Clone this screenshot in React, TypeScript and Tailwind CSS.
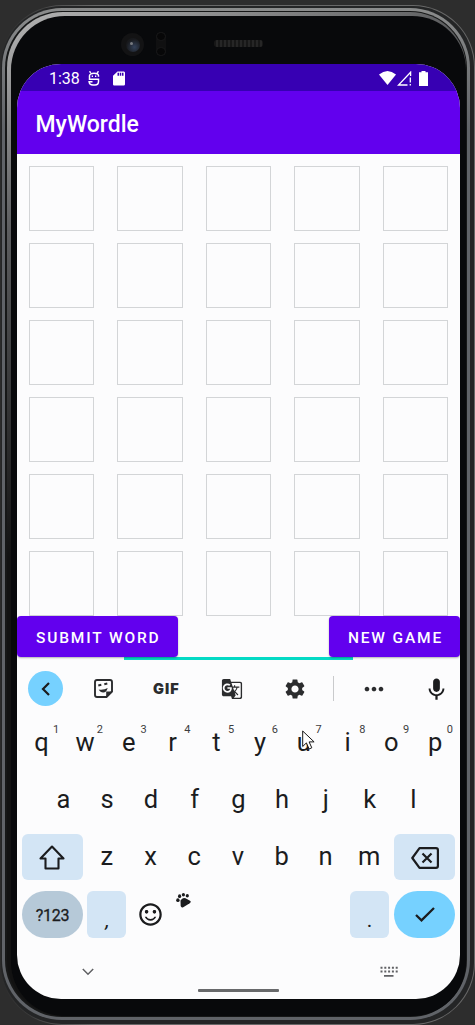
import React from "react";
import { MdGTranslate, MdSettings, MdMoreHoriz, MdKeyboardVoice, MdSdCard, MdSentimentSatisfiedAlt } from "react-icons/md";

const topRow = ["q", "w", "e", "r", "t", "y", "u", "i", "o", "p"];
const homeRow = ["a", "s", "d", "f", "g", "h", "j", "k", "l"];
const bottomRow = ["z", "x", "c", "v", "b", "n", "m"];

function StatusBar() {
  return (
    <div className="flex h-[27px] items-center bg-[#3700b3] pt-px pl-[32px] text-white">
      <span className="w-[39px] pt-[2px] text-[16px] leading-none">1:38</span>
      <svg className="h-[15px] w-[12px]" viewBox="0 0 12 15" fill="none" stroke="currentColor" strokeWidth="1.500">
        <path d="M1.500 .3l1.300 1.600M10.500 .3L9.200 1.900M1.500 5.800V4.800C1.500 1.300 10.500 1.300 10.500 4.800V5.800M1.500 5.500v2.700h9M10.500 7.500V10.500c0 2-1.500 3.500-3.500 3.500H5c-2.300 0-3.700-1.200-3.900-3.200h3.400" />
        <path d="M3.700 5.200h1.300M7 5.200h1.300" />
      </svg>
      <MdSdCard className="ml-[10px] h-[17px] w-[18px]" preserveAspectRatio="none" />
      <div className="flex-1" />
      <svg className="h-[14px] w-[17px]" viewBox="0 0 17 14" fill="currentColor">
        <path d="M0 3.500Q8.500-3.500 17 3.500L8.500 14z" />
      </svg>
      <svg className="ml-px h-[15px] w-[15px]" viewBox="0 0 15 15" fill="none" stroke="currentColor" strokeWidth="1.300">
        <path d="M10.500 14H1.500L13.600 1.200V5M13.300 6.500v5M13.300 13v1.500" />
      </svg>
      <svg className="mr-[32px] ml-[7px] h-[15px] w-[9px]" viewBox="0 0 9 15" fill="currentColor">
        <path d="M2.500 0h4v1.300H9V15H0V1.300h2.500z" />
      </svg>
    </div>
  );
}

function Board() {
  return (
    <div className="grid grid-cols-[repeat(5,65.500px)] gap-x-[23px] gap-y-[12px] pt-[12px] pl-[11.500px]">
      {Array.from({ length: 30 }, (_, i) => (
        <div key={i} className="h-[65px] border border-[#d3d5d7]" />
      ))}
    </div>
  );
}

function Actions() {
  const button =
    "relative z-10 flex h-[41px] items-center justify-center rounded-[4px] bg-[#6200ee] pt-[4px] text-[15.500px] font-medium tracking-[1.850px] text-white shadow-[0_1px_2px_rgba(0,0,0,0.3)]";
  return (
    <div className="relative flex justify-between">
      <button className={button + " w-[160.500px] pl-[2px]"}>SUBMIT WORD</button>
      <button className={button + " w-[131px] pl-[2px]"}>NEW GAME</button>
      <div className="absolute top-[41px] left-[107px] h-[3px] w-[229px] bg-[#03dac5]" />
    </div>
  );
}

function Toolbar() {
  return (
    <div className="mt-[14px] flex h-[35px] items-center pl-[11px] text-[#2b2c2e]">
      <div className="flex h-[35px] w-[35px] items-center justify-center rounded-full bg-[#76d1ff]">
        <svg className="h-[14px] w-[10px]" viewBox="0 0 10 14" fill="none" stroke="#1b1c1e" strokeWidth="2.200">
          <path d="M8 1L2 7l6 6" />
        </svg>
      </div>
      <svg className="ml-[31px] h-[19px] w-[19px]" viewBox="0 0 19 19" fill="none" stroke="currentColor" strokeWidth="1.900">
        <path d="M3 1h13q2 0 2 2v9.500L12.500 18H3q-2 0-2-2V3q0-2 2-2z" />
        <path d="M12.200 18v-5.500H18z" fill="currentColor" stroke="none" />
        <path d="M4.300 6.500l3-.7M10.300 5.200l3-.7" strokeWidth="2" />
        <path d="M4.700 10.500q5 .8 9-1.500-1.300 4.500-4.500 4.500-3 0-4.500-3z" fill="currentColor" stroke="none" />
      </svg>
      <span className="ml-[40px] w-[30px] pt-px font-['Inter',sans-serif] text-[14.500px] leading-none font-black tracking-[1px]">GIF</span>
      <MdGTranslate className="ml-[38px] h-[22px] w-[22px]" />
      <MdSettings className="ml-[40px] h-[24px] w-[24px]" />
      <div className="ml-[26px] h-[25px] w-px bg-[#c9cacc]" />
      <MdMoreHoriz className="ml-[26px] h-[28px] w-[28px]" />
      <MdKeyboardVoice className="ml-[35px] h-[27px] w-[27px] text-[#1b1c1e]" />
    </div>
  );
}

function Letter({ char, hint }: { char: string; hint?: string }) {
  return (
    <div className="relative flex h-[46px] w-[43.750px] shrink-0 items-center justify-center">
      {char}
      {hint && <span className="absolute top-[4px] right-[4px] text-[11px] leading-none text-[#3c3d40]">{hint}</span>}
    </div>
  );
}

function Keyboard() {
  return (
    <div className="px-[5px] text-[25.500px] leading-none text-[#1b1c1e]">
      <div className="mt-[14px] -ml-[2.500px] flex">
        {topRow.map((c, i) => (
          <Letter key={c} char={c} hint={String((i + 1) % 10)} />
        ))}
      </div>
      <div className="mt-[11px] flex pl-[19.500px]">
        {homeRow.map((c) => (
          <Letter key={c} char={c} />
        ))}
      </div>
      <div className="mt-[11px] flex justify-between">
        <div className="flex h-[46px] w-[61px] items-center justify-center rounded-[6px] bg-[#d3e5f5] pr-px">
          <svg className="h-[25px] w-[26px]" viewBox="0 0 26 25" fill="none" stroke="currentColor" strokeWidth="2.100" strokeLinejoin="round">
            <path d="M13 1.500L1.500 13.500H6.500V23.500h13V13.500h5z" />
          </svg>
        </div>
        <div className="-ml-px flex">
          {bottomRow.map((c) => (
            <Letter key={c} char={c} />
          ))}
        </div>
        <div className="flex h-[46px] w-[61px] items-center justify-center rounded-[6px] bg-[#d3e5f5]">
          <svg className="mt-[2px] h-[22px] w-[28px]" viewBox="0 0 28 22" fill="none" stroke="currentColor" strokeWidth="2.200" strokeLinejoin="round">
            <path d="M8.500 1.100H25q1.900 0 1.900 1.900v16q0 1.900-1.900 1.900H8.500L1.300 11zM11.500 6.500l9 9M20.500 6.500l-9 9" />
          </svg>
        </div>
      </div>
      <div className="mt-[11px] flex">
        <div className="flex h-[47px] w-[61px] items-center justify-center rounded-[23.500px] bg-[#b6c9d8] pt-[3px] text-[16px] tracking-[-0.200px] [-webkit-text-stroke:0.300px_currentColor]">?123</div>
        <div className="ml-[4px] flex h-[47px] w-[39px] items-center justify-center rounded-[6px] bg-[#d3e5f5] pt-[11px] pl-[2px] text-[21px] italic">,</div>
        <div className="relative ml-[10px] flex h-[47px] w-[28px] items-center justify-center">
          <MdSentimentSatisfiedAlt className="h-[27px] w-[27px] shrink-0" />
          <svg className="absolute top-[2px] left-[40px] h-[15px] w-[15px]" viewBox="0 0 15 15" fill="currentColor">
            <ellipse cx="1.900" cy="7.200" rx="1.700" ry="1.900" />
            <ellipse cx="3.600" cy="3.200" rx="1.600" ry="1.900" />
            <ellipse cx="7.400" cy="1.700" rx="1.600" ry="1.700" />
            <ellipse cx="11.300" cy="2.800" rx="1.600" ry="1.700" />
            <path d="M4.500 7.500Q6.500 4 9.500 5.300L14 7.700q1.600 1.200-.3 2.500l-6.500 4q-2 .8-2.500-1.200z" />
          </svg>
        </div>
        <div className="flex-1" />
        <div className="flex h-[47px] w-[39px] items-center justify-center rounded-[6px] bg-[#d3e5f5] pt-[11px] text-[21px]">.</div>
        <div className="ml-[5px] flex h-[47px] w-[61px] items-center justify-center rounded-[23.500px] bg-[#76d1ff]">
          <svg className="h-[15px] w-[20px]" viewBox="0 0 20 15" fill="none" stroke="currentColor" strokeWidth="2.300">
            <path d="M1 8l5.500 5.300L19 1" />
          </svg>
        </div>
      </div>
    </div>
  );
}

function NavBar() {
  return (
    <div className="relative flex flex-1 items-start justify-between pt-[28px] pr-[62px] pl-[65px] text-[#606164]">
      <svg className="mt-[2px] h-[8px] w-[12px]" viewBox="0 0 12 8" fill="none" stroke="currentColor" strokeWidth="1.500">
        <path d="M.8 1L6 6.300 11.200 1" />
      </svg>
      <svg className="h-[11px] w-[18px]" viewBox="0 0 18 11" stroke="currentColor" fill="none">
        <path d="M.5 1.700h18M.5 5.600h18" strokeWidth="2" strokeDasharray="2 1.800" />
        <path d="M4 9.800h9.500" strokeWidth="1.800" />
      </svg>
      <div className="absolute bottom-[7px] left-[181px] h-[3px] w-[81px] rounded-[1px] bg-[#68696b]" />
    </div>
  );
}

function Hardware() {
  return (
    <div className="flex h-[48px] items-start">
      <div className="mt-[17px] ml-[104px] flex h-[23px] w-[23px] items-center justify-center rounded-full bg-[#131314]">
        <div className="flex h-[14px] w-[14px] items-center justify-center rounded-full bg-[radial-gradient(circle_at_60%_65%,#34425a,#18191c_65%)]">
          <div className="mr-[2px] mb-[3px] h-[3px] w-[3px] rounded-full bg-[#777a80]" />
        </div>
      </div>
      <div className="mt-[16px] ml-[12px] flex h-[24px] w-[10px] flex-col justify-between rounded-full bg-[#101011]">
        <div className="h-[9px] rounded-full border border-[#19191a] bg-[#070708]" />
        <div className="h-[9px] rounded-full border border-[#19191a] bg-[#070708]" />
      </div>
      <div className="mt-[24px] ml-[48px] h-[7px] w-[49px] rounded-[3px] bg-[repeating-linear-gradient(90deg,#171717_0_2px,#262626_2px_4px)]" />
    </div>
  );
}

function Cursor() {
  return (
    <svg className="absolute top-[666px] left-[285px] z-20 h-[20px] w-[14px]" viewBox="0 0 14 20" fill="#fff" stroke="#151515" strokeWidth="1">
      <path d="M.7 1v15.500l3.700-3.600 2.700 6.100 2.700-1.200-2.700-5.900h5z" />
    </svg>
  );
}

export default function App() {
  return (
    <div className="h-[1025px] w-[475px] overflow-hidden bg-[#2d2d2d] pt-[5px] font-['Roboto',sans-serif]">
      <div className="h-[1020px] rounded-[62px] bg-[linear-gradient(90deg,#2b2b2b,#686868_20%,#686868)] p-px">
        <div className="h-full rounded-[61px] bg-[#242526] pt-[2px] pr-[4px] pb-[4px] pl-px">
          <div className="h-full rounded-[60px] bg-[linear-gradient(180deg,#8b8c8c,#606368_12%,#606368)] p-[3px]">
            <div className="h-full rounded-[57px] bg-[#161717] pt-px pr-px pb-px pl-[2px]">
              <div className="h-full rounded-[56px] bg-[linear-gradient(155deg,#b5b5b5,#5c5d5f_18%,#121212_45%)] pt-[4px] pl-[4px]">
                <div className="flex h-full flex-col rounded-[54px] bg-[#08090b] pr-[6px] pb-[17px] pl-[6px]">
                  <Hardware />
                  <main className="relative flex flex-1 flex-col overflow-hidden rounded-[44px] bg-[#fcfcfd]">
                    <StatusBar />
                    <header className="flex h-[63px] items-center bg-[#6200ee] pt-[5px] pl-[18.500px] text-[23px] font-medium text-white">MyWordle</header>
                    <Board />
                    <Actions />
                    <Toolbar />
                    <Keyboard />
                    <NavBar />
                    <Cursor />
                  </main>
                </div>
              </div>
            </div>
          </div>
        </div>
      </div>
    </div>
  );
}
